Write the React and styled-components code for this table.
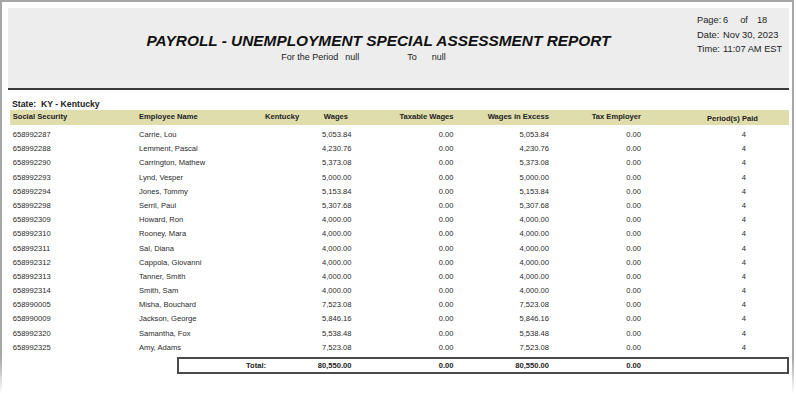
import React from 'react';
import styled, { createGlobalStyle } from 'styled-components';

const Global = createGlobalStyle`
  html, body {
    margin: 0;
    padding: 0;
    background: #ffffff;
  }
  body {
    font-family: "Liberation Sans", Arial, sans-serif;
    color: #222;
  }
`

const Frame = styled.div`
  width: 794px;
  height: 394px;
  box-sizing: border-box;
  border-top: 2px solid #a6a6a6;
  padding: 6px 5px 0 8px;
  overflow: hidden;
  background:
    linear-gradient(to bottom, #a6a6a6 0, #a6a6a6 355px, rgba(166,166,166,0) 392px) left top / 2px 100% no-repeat,
    linear-gradient(to bottom, #a6a6a6 0, #a6a6a6 355px, rgba(166,166,166,0) 392px) right top / 2px 100% no-repeat;
`

const Header = styled.div`
  height: 80px;
  background: #ededed;
  border-bottom: 2px solid #3a3a3a;
  display: flex;
`

const TitleBlock = styled.div`
  flex: 1;
  padding: 24px 0 0 52px;
  display: flex;
  flex-direction: column;
  align-items: center;
`

const Title = styled.div`
  font-size: 15.4px;
  line-height: 18px;
  font-weight: bold;
  font-style: italic;
  color: #111;
  white-space: nowrap;
`

const Period = styled.div`
  margin-top: 2px;
  padding-right: 30px;
  font-size: 9px;
  line-height: 11px;
  display: flex;
  white-space: nowrap;
`

const PeriodPart = styled.span`
  margin-left: ${p => p.gap || 0}px;
`

const Info = styled.div`
  width: 92px;
  padding-top: 5px;
  display: grid;
  grid-template-columns: 26px auto;
  grid-auto-rows: 14.5px;
  font-size: 9.3px;
  line-height: 14.5px;
  white-space: nowrap;
`

const PageOf = styled.span`
  display: flex;
`

const Of = styled.span`
  margin-left: ${p => p.gap}px;
`

const Table = styled.div`
  margin-left: 2px;
`

const StateLine = styled.div`
  margin-top: 9px;
  padding-left: 2px;
  font-size: 8.7px;
  line-height: 11px;
  font-weight: bold;
  white-space: pre;
`

const cols = '126.3px 121px 45px 46.5px 102px 95.5px 92px 1fr'

const HeadRow = styled.div`
  display: grid;
  grid-template-columns: ${cols};
  height: 15px;
  padding-left: 2.7px;
  background: #dfddac;
  font-size: 7.6px;
  font-weight: bold;
  line-height: 13px;
  white-space: nowrap;
`

const Body = styled.div`
  margin-top: 3px;
`

const Row = styled.div`
  display: grid;
  grid-template-columns: ${cols};
  height: 14.2px;
  padding-left: 2.7px;
  font-size: 7.6px;
  line-height: 14.2px;
  color: #2a2a2a;
  white-space: nowrap;
`

const Cell = styled.div`
  text-align: ${p => p.align || 'left'};
  padding-left: ${p => p.pl || 0}px;
  padding-right: ${p => p.pr || 0}px;
  ${p => p.low ? 'padding-top: 2px;' : ''}
`

const TotalBox = styled.div`
  margin: 2px 0 0 167px;
  height: 13px;
  border: 2px solid #4a4a4a;
  display: grid;
  grid-template-columns: 126px 46.5px 102px 95.5px 92px 1fr;
  font-size: 7.6px;
  font-weight: bold;
  line-height: 13px;
  white-space: nowrap;
`

const rows = [
  ['658992287', 'Carrie, Lou', '5,053.84'],
  ['658992288', 'Lemment, Pascal', '4,230.76'],
  ['658992290', 'Carrington, Mathew', '5,373.08'],
  ['658992293', 'Lynd, Vesper', '5,000.00'],
  ['658992294', 'Jones, Tommy', '5,153.84'],
  ['658992298', 'Serril, Paul', '5,307.68'],
  ['658992309', 'Howard, Ron', '4,000.00'],
  ['658992310', 'Rooney, Mara', '4,000.00'],
  ['658992311', 'Sal, Diana', '4,000.00'],
  ['658992312', 'Cappola, Giovanni', '4,000.00'],
  ['658992313', 'Tanner, Smith', '4,000.00'],
  ['658992314', 'Smith, Sam', '4,000.00'],
  ['658990005', 'Misha, Bouchard', '7,523.08'],
  ['658990009', 'Jackson, George', '5,846.16'],
  ['658992320', 'Samantha, Fox', '5,538.48'],
  ['658992325', 'Amy, Adams', '7,523.08'],
]

const App = () => {
  return <>
    <Global />
    <Frame>
      <Header>
        <TitleBlock>
          <Title>PAYROLL - UNEMPLOYMENT SPECIAL ASSESSMENT REPORT</Title>
          <Period>
            <PeriodPart>For the Period</PeriodPart>
            <PeriodPart gap={7}>null</PeriodPart>
            <PeriodPart gap={48}>To</PeriodPart>
            <PeriodPart gap={15}>null</PeriodPart>
          </Period>
        </TitleBlock>
        <Info>
          <span>Page:</span>
          <PageOf>6<Of gap={12}>of</Of><Of gap={9}>18</Of></PageOf>
          <span>Date:</span>
          <span>Nov 30, 2023</span>
          <span>Time:</span>
          <span>11:07 AM EST</span>
        </Info>
      </Header>

      <Table>
        <StateLine>State:  KY - Kentucky</StateLine>
        <HeadRow>
          <Cell>Social Security</Cell>
          <Cell>Employee Name</Cell>
          <Cell pl={5}>Kentucky</Cell>
          <Cell align="right" pr={3.5}>Wages</Cell>
          <Cell align="right">Taxable Wages</Cell>
          <Cell align="right">Wages in Excess</Cell>
          <Cell align="right">Tax Employer</Cell>
          <Cell align="right" pr={31} low>Period(s) Paid</Cell>
        </HeadRow>
        <Body>
          {rows.map(r => (
            <Row key={r[0]}>
              <Cell>{r[0]}</Cell>
              <Cell>{r[1]}</Cell>
              <Cell />
              <Cell align="right">{r[2]}</Cell>
              <Cell align="right">0.00</Cell>
              <Cell align="right">{r[2]}</Cell>
              <Cell align="right">0.00</Cell>
              <Cell align="right" pr={43}>4</Cell>
            </Row>
          ))}
        </Body>
        <TotalBox>
          <Cell pl={67}>Total:</Cell>
          <Cell align="right">80,550.00</Cell>
          <Cell align="right">0.00</Cell>
          <Cell align="right">80,550.00</Cell>
          <Cell align="right">0.00</Cell>
          <Cell />
        </TotalBox>
      </Table>
    </Frame>
  </>
}

export default App;
